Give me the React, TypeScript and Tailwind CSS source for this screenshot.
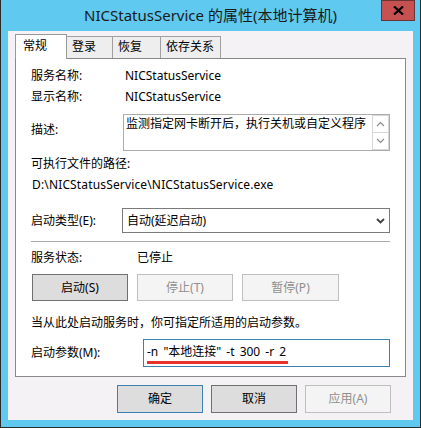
const FONT = "font-['Noto_Sans','Noto_Sans_CJK_SC',sans-serif]"

const Button = ({
  label,
  disabled,
  def,
  w,
}: {
  label: string
  disabled?: boolean
  def?: boolean
  w: string
}) => (
  <div
    className={`${w} flex items-center justify-center border text-[12px] ${
      disabled
        ? "border-[#bfbfbf] bg-[#f4f4f4] text-[#8f8f8f]"
        : def
          ? "border-[#3c7fb1] bg-[#dddddd] text-black"
          : "border-[#707070] bg-[#dddddd] text-black"
    }`}
  >
    {label}
  </div>
)

const Chevron = ({ up }: { up?: boolean }) => (
  <svg width="9" height="6" viewBox="0 0 9 6">
    <path
      d={up ? "M1 5 L4.5 1.5 L8 5" : "M1 1 L4.5 4.5 L8 1"}
      fill="none"
      stroke="#8a8a8a"
      strokeWidth="1.1"
    />
  </svg>
)

const TABS = [
  { label: "常规", w: "w-[52px]" },
  { label: "登录", w: "w-[47px]" },
  { label: "恢复", w: "w-[49px]" },
  { label: "依存关系", w: "w-[61px]" },
]

export default function App() {
  return (
    <div
      className={`${FONT} flex h-[428px] w-[421px] flex-col border-x border-b border-[#2b2b2b] bg-[#5fc9ef] text-[12px] leading-[16px] text-black`}
    >
      {/* title bar */}
      <div className="flex h-[31px] items-start">
        <div className="w-[39px]" />
        <div className="flex-1 pt-[5px] text-center text-[15px] leading-[20px] text-[#1b1b1b]">
          NICStatusService 的属性(本地计算机)
        </div>
        <div className="mr-[5px] flex h-[21px] w-[34px] items-center justify-center border border-[#6b3434] bg-[#c75050]">
          <svg width="11" height="9" viewBox="0 0 11 9">
            <path d="M1 0.5 L10 8.5 M10 0.5 L1 8.5" stroke="#000" strokeWidth="2.2" />
          </svg>
        </div>
      </div>

      {/* client */}
      <div className="mx-[7px] flex h-[389px] flex-col bg-[#f5f2f5] px-[7px] pt-[3px]">
        <div className="flex h-[24px] items-end">
          {TABS.map((t, i) =>
            i === 0 ? (
              <div
                key={t.label}
                className={`${t.w} relative z-10 -mb-px h-[25px] border-x border-t border-[#999999] bg-white pl-[7px] pt-[3px]`}
              >
                {t.label}
              </div>
            ) : (
              <div
                key={t.label}
                className={`${t.w} -ml-px h-[22px] border-x border-t border-[#a0a0a0] bg-[#efeeef] pl-[5px] pt-[2px]`}
              >
                {t.label}
              </div>
            )
          )}
        </div>

        <div className="flex h-[319px] flex-col border border-[#898989] bg-white px-[15px]">
          <div className="mt-[9px] flex">
            <span className="w-[94px]">服务名称:</span>
            <span>NICStatusService</span>
          </div>
          <div className="mt-[5px] flex">
            <span className="w-[94px]">显示名称:</span>
            <span>NICStatusService</span>
          </div>

          <div className="mt-[9px] flex h-[37px]">
            <span className="w-[92px] pt-[8px]">描述:</span>
            <div className="flex flex-1 border border-[#acacac]">
              <div className="flex-1 pl-[2px] pt-[1px]">
                监测指定网卡断开后，执行关机或自定义程序
              </div>
              <div className="flex w-[17px] flex-col">
                <div className="flex h-[18px] items-center justify-center border border-[#d6d6d6]">
                  <Chevron up />
                </div>
                <div className="-mt-px flex flex-1 items-center justify-center border border-[#d6d6d6]">
                  <Chevron />
                </div>
              </div>
            </div>
          </div>

          <div className="mt-[5px]">可执行文件的路径:</div>
          <div className="mt-[5px] pl-px tracking-[0.15px]">D:\NICStatusService\NICStatusService.exe</div>

          <div className="mt-[15px] flex h-[25px]">
            <span className="flex w-[91px] items-center">启动类型(E):</span>
            <div className="flex flex-1 items-center border border-[#7a7a7a] pl-[4px] pr-[4px]">
              <span className="flex-1">自动(延迟启动)</span>
              <svg width="9" height="6" viewBox="0 0 9 6">
                <path d="M1 1 L4.5 4.5 L8 1" fill="none" stroke="#404040" strokeWidth="1.8" />
              </svg>
            </div>
          </div>

          <div className="mt-[8px] h-px bg-[#a8a8a8]" />

          <div className="mt-[8px] flex">
            <span className="w-[106px]">服务状态:</span>
            <span>已停止</span>
          </div>

          <div className="mt-[8px] flex h-[27px] gap-[9px] pl-px">
            <Button label="启动(S)" w="w-[96px]" />
            <Button label="停止(T)" w="w-[96px]" disabled />
            <Button label="暂停(P)" w="w-[97px]" disabled />
          </div>

          <div className="mt-[14px]">当从此处启动服务时，你可指定所适用的启动参数。</div>

          <div className="mt-[8px] flex h-[28px]">
            <span className="flex w-[112px] items-center">启动参数(M):</span>
            <div className="flex flex-1 flex-col border border-[#3c7fb1] pl-[3px] pt-[4px]">
              <span className="text-[12px] leading-[16px] whitespace-pre [word-spacing:2px]">-n "本地连接" -t 300 -r 2</span>
              <div className="mt-px h-[3px] w-[141px] bg-[#e8312a]" />
            </div>
          </div>
        </div>

        <div className="mt-[8px] flex h-[28px] justify-end gap-[8px] pr-[15px]">
          <Button label="确定" w="w-[86px]" def />
          <Button label="取消" w="w-[86px]" />
          <Button label="应用(A)" w="w-[86px]" disabled />
        </div>
      </div>
    </div>
  )
}
